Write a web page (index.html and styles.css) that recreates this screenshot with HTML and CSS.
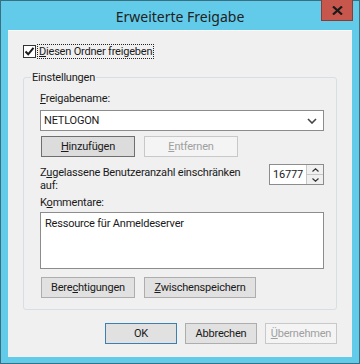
FILE: index.html
```html
<!DOCTYPE html>
<html lang="de">
<head>
    <meta charset="UTF-8">
    <title>Erweiterte Freigabe</title>
    <link rel="stylesheet" href="styles.css">
</head>
<body>
    <div class="window">
        <div class="titlebar">
            <span class="title">Erweiterte Freigabe</span>
            <div class="close">
                <svg width="11" height="9" viewBox="0 0 11 9"><path d="M1 0.5 L10 8.5 M10 0.5 L1 8.5" stroke="#1a1a1a" stroke-width="2.2"/></svg>
            </div>
        </div>
        <div class="content">
            <label class="check-row">
                <span class="checkbox">
                    <svg width="11" height="11" viewBox="0 0 11 11"><path d="M1.5 5.5 L4.2 8.3 L9.5 1.8" fill="none" stroke="#1a1a1a" stroke-width="2"/></svg>
                </span>
                <span class="focus"><u>D</u>iesen Ordner freigeben</span>
            </label>

            <div class="group">
                <div class="legend">Einstellungen</div>

                <div class="label"><u>F</u>reigabename:</div>
                <div class="combo">
                    <span>NETLOGON</span>
                    <svg width="10" height="6" viewBox="0 0 10 6"><path d="M1 1 L5 5 L9 1" fill="none" stroke="#444" stroke-width="1.6"/></svg>
                </div>

                <div class="btn-row">
                    <button class="btn focused"><u>H</u>inzufügen</button>
                    <button class="btn disabled"><u>E</u>ntfernen</button>
                </div>

                <div class="limit-row">
                    <div class="limit-text">Z<u>u</u>gelassene Benutzeranzahl einschränken<br>auf:</div>
                    <div class="spin">
                        <span class="spin-value">16777</span>
                        <div class="spin-btns">
                            <div class="spin-btn"><svg width="7" height="4" viewBox="0 0 7 4"><path d="M0.5 3.5 L3.5 0.8 L6.5 3.5" fill="none" stroke="#333" stroke-width="1.2"/></svg></div>
                            <div class="spin-btn"><svg width="7" height="4" viewBox="0 0 7 4"><path d="M0.5 0.5 L3.5 3.2 L6.5 0.5" fill="none" stroke="#333" stroke-width="1.2"/></svg></div>
                        </div>
                    </div>
                </div>

                <div class="label comments">K<u>o</u>mmentare:</div>
                <div class="textarea">Ressource für Anmeldeserver</div>

                <div class="btn-row bottom">
                    <button class="btn">Bere<u>c</u>htigungen</button>
                    <button class="btn wide"><u>Z</u>wischenspeichern</button>
                </div>
            </div>

            <div class="dialog-buttons">
                <button class="btn small default">OK</button>
                <button class="btn small">Abbrechen</button>
                <button class="btn small disabled"><u>Ü</u>bernehmen</button>
            </div>
        </div>
    </div>
</body>
</html>
```

FILE: styles.css
```css
body {
    margin: 0;
    font-family: Roboto, "Noto Sans", sans-serif;
    font-size: 11px;
    letter-spacing: -0.2px;
    line-height: 14px;
    color: #1a1a1a;
}

.window {
    width: 360px;
    height: 364px;
    box-sizing: border-box;
    background-color: #62cbea;
    border: 1px solid #3a6f80;
    display: flex;
    flex-direction: column;
}

.titlebar {
    height: 29px;
    flex: none;
    display: flex;
    justify-content: center;
    align-items: center;
    position: relative;
}

.title {
    font-family: "Noto Sans", sans-serif;
    font-size: 14px;
    letter-spacing: 0;
    color: #222;
    margin-top: 2px;
}

.close {
    position: absolute;
    top: -1px;
    right: 6px;
    width: 30px;
    height: 20px;
    background-color: #c7564d;
    border: 1px solid #8c3a34;
    border-top: none;
    display: flex;
    justify-content: center;
    align-items: center;
}

.content {
    flex: 1;
    margin: 0 7px 6px 7px;
    background-color: #f0f0f0;
    border-top: 1px solid #fafafa;
    padding: 14px 15px 0 15px;
    display: flex;
    flex-direction: column;
}

.check-row {
    display: flex;
    align-items: center;
    height: 13px;
}

.checkbox {
    width: 11px;
    height: 11px;
    border: 1px solid #333;
    background-color: #fff;
    display: flex;
    justify-content: center;
    align-items: center;
}

.focus {
    margin-left: 1px;
    border: 1px dotted #222;
    padding: 0 1px;
    line-height: 13px;
}

.group {
    margin-top: 19px;
    padding: 0 12px 11px 16px;
    border: 1px solid #d5dfe5;
    border-radius: 3px;
}

.legend {
    margin: -7px 0 0 -9px;
    padding: 0 1px;
    background-color: #f0f0f0;
    width: max-content;
    height: 14px;
}

.label {
    margin-top: 7px;
    height: 14px;
}

.combo {
    margin-top: 4px;
    height: 21px;
    box-sizing: border-box;
    background-color: #fff;
    border: 1px solid #8c8c8c;
    display: flex;
    align-items: center;
    justify-content: space-between;
    padding: 0 6px 0 3px;
}

.btn-row {
    display: flex;
    gap: 9px;
    margin-top: 5px;
    padding-left: 1px;
}

.btn {
    width: 94px;
    height: 21px;
    box-sizing: border-box;
    font-family: inherit;
    font-size: 11px;
    letter-spacing: -0.2px;
    color: #1a1a1a;
    background-color: #e1e1e1;
    border: 1px solid #adadad;
    padding: 0;
}

.btn.focused {
    border: 1px solid #6f6f6f;
    background-color: #dcdcdc;
}

.btn.disabled {
    color: #a0a0a0;
    background-color: #f4f4f4;
    border-color: #c8c8c8;
}

.btn.wide {
    width: 112px;
}

.limit-row {
    margin-top: 9px;
    height: 27px;
    display: flex;
    justify-content: space-between;
    align-items: flex-start;
}

.limit-text {
    white-space: nowrap;
    line-height: 13px;
}

.spin {
    margin-top: -2px;
    width: 55px;
    height: 21px;
    box-sizing: border-box;
    border: 1px solid #8c8c8c;
    background-color: #fff;
    display: flex;
}

.spin-value {
    flex: 1;
    padding-left: 3px;
    line-height: 19px;
    overflow: hidden;
}

.spin-btns {
    width: 17px;
    display: flex;
    flex-direction: column;
}

.spin-btn {
    flex: 1;
    background-color: #f0f0f0;
    border-left: 1px solid #c8c8c8;
    border-bottom: 1px solid #c8c8c8;
    display: flex;
    justify-content: center;
    align-items: center;
}

.spin-btn:last-child {
    border-bottom: none;
}

.label.comments {
    margin-top: 3px;
}

.textarea {
    margin-top: 2px;
    height: 57px;
    box-sizing: border-box;
    border: 1px solid #8c8c8c;
    background-color: #fff;
    padding: 3px 4px;
    line-height: 15px;
}

.btn-row.bottom {
    margin-top: 8px;
}

.dialog-buttons {
    display: flex;
    justify-content: flex-end;
    gap: 8px;
    margin-top: 13px;
}

.btn.small {
    width: 72px;
}

.btn.default {
    border: 1px solid #3c7fb1;
}
```
